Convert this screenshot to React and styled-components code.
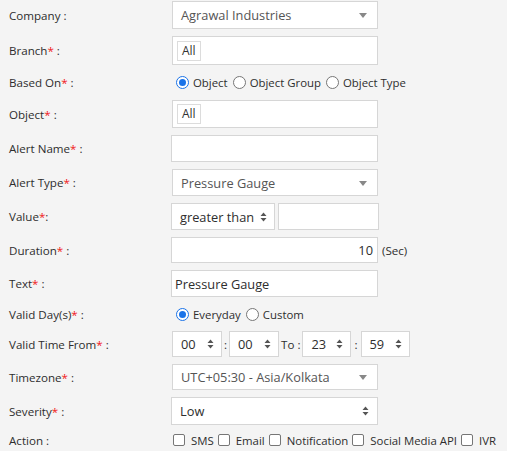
import React from 'react'
import styled, { createGlobalStyle } from 'styled-components'

const GlobalStyle = createGlobalStyle`
  html, body {
    margin: 0;
    padding: 0;
    background: #f4f4f4;
  }
  body {
    font-family: "Open Sans", "Liberation Sans", sans-serif;
    color: #333;
  }
`

const Form = styled.div`
  display: flex;
  flex-direction: column;
  gap: 7px;
  padding-top: 1px;
  width: 507px;
`

const Row = styled.div`
  display: grid;
  grid-template-columns: 172px 1fr;
  align-items: center;
  height: ${props => props.h}px;
`

const Label = styled.div`
  padding-left: 9px;
  font-size: 11.6px;
  color: #2e2e2e;
  white-space: nowrap;
`

const Req = styled.span`
  color: #f02020;
`

const Field = styled.div`
  display: flex;
  align-items: center;
  gap: ${props => props.gap || 0}px;
  height: 100%;
  white-space: nowrap;
`

const Box = styled.div`
  box-sizing: border-box;
  width: ${props => props.w || 206}px;
  height: 100%;
  margin-left: ${props => props.ml || 0}px;
  background: #fff;
  border: 1px solid #d6d6d6;
  display: flex;
  align-items: center;
  justify-content: ${props => props.right ? 'flex-end' : 'flex-start'};
  padding: 0 ${props => props.pad ?? 8}px;
  font-size: 12.8px;
  color: ${props => props.muted ? '#555' : '#2e2e2e'};
  position: relative;
`

const Tag = styled.span`
  border: 1px solid #dcdcdc;
  padding: 1px 4px;
  font-size: 12px;
  color: #333;
  line-height: 16px;
`

const Caret = styled.span`
  position: absolute;
  right: 10px;
  top: 50%;
  margin-top: -2px;
  border-left: 4px solid transparent;
  border-right: 4px solid transparent;
  border-top: 5px solid #888;
`

const Spinner = styled.svg`
  position: absolute;
  right: ${props => props.r || 9}px;
  top: 50%;
  margin-top: -5px;
`

const Choice = styled.label`
  display: inline-flex;
  align-items: center;
  font-size: 11.4px;
  color: #2e2e2e;
  margin-right: 1px;
`

const Radio = styled.span`
  box-sizing: border-box;
  width: 13px;
  height: 13px;
  border-radius: 50%;
  margin: 0 4px 0 4px;
  border: 1px solid ${props => props.on ? '#1a73e8' : '#767676'};
  background: #fff;
  display: inline-flex;
  align-items: center;
  justify-content: center;
  &::after {
    content: '';
    width: 7px;
    height: 7px;
    border-radius: 50%;
    background: ${props => props.on ? '#1a73e8' : 'transparent'};
  }
`

const Check = styled.span`
  box-sizing: border-box;
  width: 12px;
  height: 12px;
  border-radius: 2px;
  border: 1px solid #767676;
  background: #fff;
  margin: 0 6px 0 ${props => props.first ? 1 : 3}px;
`

const Sep = styled.span`
  font-size: 11.6px;
  color: #2e2e2e;
  padding: 0 ${props => props.p ?? 3}px;
`

const Updown = ({ r }) => (
  <Spinner r={r} width="7" height="10" viewBox="0 0 7 10">
    <path d="M3.5 0.5 L6.5 4 L0.5 4 Z M3.5 9.5 L6.5 6 L0.5 6 Z" fill="#555" />
  </Spinner>
)

const TimeBox = ({ v, w }) => (
  <Box w={w || 50}>
    {v}
    <Updown r={7} />
  </Box>
)

const App = () => {
  return (
    <>
      <GlobalStyle />
      <Form>
        <Row h={28}>
          <Label>Company :</Label>
          <Field>
            <Box muted>Agrawal Industries<Caret /></Box>
          </Field>
        </Row>
        <Row h={29}>
          <Label>Branch<Req>*</Req> :</Label>
          <Field><Box pad={4}><Tag>All</Tag></Box></Field>
        </Row>
        <Row h={21}>
          <Label>Based On<Req>*</Req> :</Label>
          <Field>
            <Choice><Radio on />Object</Choice>
            <Choice><Radio />Object Group</Choice>
            <Choice><Radio />Object Type</Choice>
          </Field>
        </Row>
        <Row h={28}>
          <Label>Object<Req>*</Req> :</Label>
          <Field><Box pad={4}><Tag>All</Tag></Box></Field>
        </Row>
        <Row h={27}>
          <Label>Alert Name<Req>*</Req> :</Label>
          <Field><Box w={207} ml={-1} /></Field>
        </Row>
        <Row h={27}>
          <Label>Alert Type<Req>*</Req> :</Label>
          <Field><Box muted>Pressure Gauge<Caret /></Box></Field>
        </Row>
        <Row h={27}>
          <Label>Value<Req>*</Req>:</Label>
          <Field gap={3}>
            <Box w={104} ml={-1}>greater than<Updown r={7} /></Box>
            <Box w={101} />
          </Field>
        </Row>
        <Row h={26}>
          <Label>Duration<Req>*</Req> :</Label>
          <Field gap={4}>
            <Box w={207} ml={-1} right pad={4}>10</Box>
            <Sep p={0}>(Sec)</Sep>
          </Field>
        </Row>
        <Row h={27}>
          <Label>Text<Req>*</Req> :</Label>
          <Field><Box w={207} ml={-1} pad={3}>Pressure Gauge</Box></Field>
        </Row>
        <Row h={20}>
          <Label>Valid Day(s)<Req>*</Req> :</Label>
          <Field>
            <Choice><Radio on />Everyday</Choice>
            <Choice><Radio />Custom</Choice>
          </Field>
        </Row>
        <Row h={26}>
          <Label>Valid Time From<Req>*</Req> :</Label>
          <Field>
            <TimeBox v="00" />
            <Sep p={2}>:</Sep>
            <TimeBox v="00" />
            <Sep p={2}>To :</Sep>
            <TimeBox v="23" w={49} />
            <Sep p={3}>:</Sep>
            <TimeBox v="59" w={49} />
          </Field>
        </Row>
        <Row h={26}>
          <Label>Timezone<Req>*</Req> :</Label>
          <Field><Box muted>UTC+05:30 - Asia/Kolkata<Caret /></Box></Field>
        </Row>
        <Row h={28}>
          <Label>Severity<Req>*</Req> :</Label>
          <Field><Box w={207} ml={-1}>Low<Updown r={8} /></Box></Field>
        </Row>
        <Row h={16}>
          <Label>Action :</Label>
          <Field>
            <Choice><Check first />SMS</Choice>
            <Choice><Check />Email</Choice>
            <Choice><Check />Notification</Choice>
            <Choice><Check />Social Media API</Choice>
            <Choice><Check />IVR</Choice>
          </Field>
        </Row>
      </Form>
    </>
  )
}

export default App
